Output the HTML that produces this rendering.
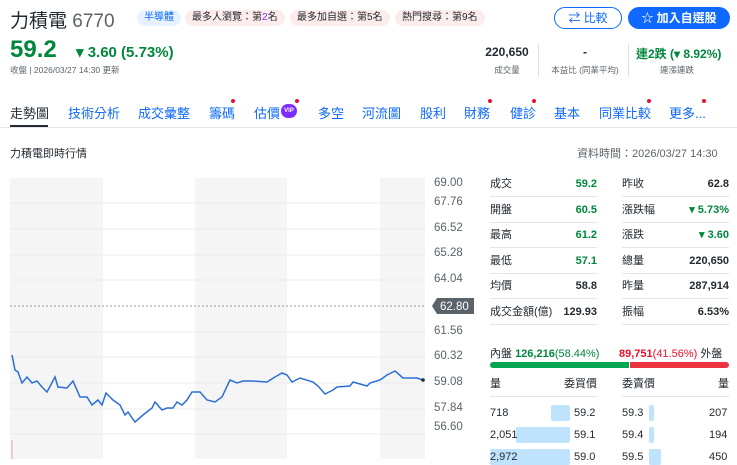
<!DOCTYPE html>
<html><head><meta charset="utf-8"><style>
*{margin:0;padding:0;box-sizing:border-box}
body{width:737px;height:459px;overflow:hidden;background:#fff;font-family:"Liberation Sans","Noto Sans CJK TC",sans-serif;color:#232a31;position:relative}
.a{position:absolute;white-space:nowrap}
.g{color:#00873c}.r{color:#eb0f29}
.tag{position:absolute;top:10px;height:16px;border-radius:8px;font-size:10px;line-height:16px;padding:0 7px;background:#fdecec;color:#232a31}
.tab{position:absolute;top:103px;font-size:13px;color:#0f69ff}
.dot{position:absolute;width:4px;height:4px;border-radius:2px;background:#eb0f29}
.row{position:absolute;height:25.5px;border-bottom:1px solid #e6e6e6;font-size:11px;line-height:26px}
.row span{position:absolute}
.row b{position:absolute;right:0;font-weight:bold}
.yl{position:absolute;left:434px;font-size:11.5px;color:#5b636a}
</style></head><body>
<div class="a" style="left:10px;top:6px;font-size:19px">力積電 <span style="color:#5b636a">6770</span></div>
<div class="tag" style="left:137px;background:#e6f2ff;color:#0f69ff">半導體</div>
<div class="tag" style="left:185px">最多人瀏覽：第<span style="color:#7d2eff">2</span>名</div>
<div class="tag" style="left:290px">最多加自選：第5名</div>
<div class="tag" style="left:395px">熱門搜尋：第9名</div>
<div class="a" style="left:554px;top:7px;width:68px;height:22px;border:1px solid #0f69ff;border-radius:11px;color:#0f69ff;font-size:12px;line-height:20px;text-align:center">⇄ 比較</div>
<div class="a" style="left:628px;top:7px;width:102px;height:22px;background:#0f69ff;border-radius:11px;color:#fff;font-size:12px;font-weight:bold;line-height:22px;text-align:center">☆ 加入自選股</div>
<div class="a g" style="left:10px;top:36px;font-size:24px;font-weight:bold">59.2</div>
<div class="a g" style="left:76px;top:43px;font-size:15px;font-weight:bold">▾ 3.60 (5.73%)</div>
<div class="a" style="left:10px;top:64px;font-size:8.5px;color:#5b636a">收盤 | 2026/03/27 14:30 更新</div>
<div class="a" style="left:482px;top:45px;font-size:12px;font-weight:bold;width:50px;text-align:center">220,650</div>
<div class="a" style="left:482px;top:64px;font-size:8.5px;color:#5b636a;width:50px;text-align:center">成交量</div>
<div class="a" style="left:538px;top:44px;height:33px;border-left:1px solid #e0e0e0"></div>
<div class="a" style="left:545px;top:45px;font-size:12px;font-weight:bold;width:80px;text-align:center">-</div>
<div class="a" style="left:545px;top:64px;font-size:8.5px;color:#5b636a;width:80px;text-align:center">本益比 (同業平均)</div>
<div class="a" style="left:628px;top:44px;height:33px;border-left:1px solid #e0e0e0"></div>
<div class="a g" style="left:636px;top:45px;font-size:12px;font-weight:bold">連2跌 (▾ 8.92%)</div>
<div class="a" style="left:660px;top:64px;font-size:8.5px;color:#5b636a">連漲連跌</div>
<div class="tab" style="left:10px;color:#232a31">走勢圖</div>
<div class="a" style="left:10px;top:125px;width:38px;height:3px;background:#232a31"></div>
<div class="a" style="left:0;top:127px;width:737px;height:1px;background:#e6e6e6"></div>
<div class="tab" style="left:68px">技術分析</div>
<div class="tab" style="left:138px">成交彙整</div>
<div class="tab" style="left:209px">籌碼</div><div class="dot" style="left:231px;top:99px"></div>
<div class="tab" style="left:254px">估價</div>
<div class="a" style="left:281px;top:104px;width:16px;height:14px;border-radius:7px;background:#7d2eff;color:#fff;font-size:6px;line-height:14px;text-align:center;font-weight:bold">VIP</div><div class="dot" style="left:295px;top:99px"></div>
<div class="tab" style="left:318px">多空</div>
<div class="tab" style="left:362px">河流圖</div>
<div class="tab" style="left:420px">股利</div>
<div class="tab" style="left:464px">財務</div><div class="dot" style="left:488px;top:99px"></div>
<div class="tab" style="left:510px">健診</div><div class="dot" style="left:532px;top:99px"></div>
<div class="tab" style="left:554px">基本</div>
<div class="tab" style="left:599px">同業比較</div><div class="dot" style="left:647px;top:99px"></div>
<div class="tab" style="left:669px">更多...</div><div class="dot" style="left:702px;top:99px"></div>
<div class="a" style="left:10px;top:145px;font-size:11px">力積電即時行情</div>
<div class="a" style="left:577px;top:145px;font-size:11px;color:#5b636a">資料時間：2026/03/27 14:30</div>
<svg class="a" style="left:0;top:170px" width="480" height="289">
<rect x="10" y="8" width="93" height="281" fill="#f5f5f5"/><rect x="195" y="8" width="92" height="281" fill="#f5f5f5"/><rect x="380" y="8" width="45" height="281" fill="#f5f5f5"/>
<g stroke="#ebebeb" stroke-width="1"><line x1="10" x2="425" y1="33" y2="33"/><line x1="10" x2="425" y1="59" y2="59"/><line x1="10" x2="425" y1="85" y2="85"/><line x1="10" x2="425" y1="110" y2="110"/><line x1="10" x2="425" y1="162" y2="162"/><line x1="10" x2="425" y1="187" y2="187"/><line x1="10" x2="425" y1="213" y2="213"/><line x1="10" x2="425" y1="239" y2="239"/><line x1="10" x2="425" y1="264" y2="264"/></g>
<line x1="10" x2="425" y1="136" y2="136" stroke="#999" stroke-dasharray="2,2"/>
<line x1="12" x2="12" y1="270" y2="289" stroke="#f4a0a8"/>
<polyline fill="none" stroke="#2b6fd6" stroke-width="1.5" points="12,185 15,200 18,202 22,213 27,207 32,213 37,211 42,217 47,222 55,207 58,217 67,218 73,211 80,227 87,227 92,235 98,230 102,235 106,223 113,230 120,235 125,245 128,242 135,252 143,245 152,238 155,232 162,240 167,238 173,238 177,232 182,235 187,230 192,222 200,222 207,230 215,232 222,227 230,210 237,213 243,211 253,211 267,212 275,207 282,203 287,205 292,212 300,208 313,212 318,216 325,224 333,220 337,217 350,216 353,212 360,214 367,216 370,213 380,210 387,205 395,201 403,208 417,208 423,210"/>
<circle cx="423" cy="210" r="1.8" fill="#232a31"/>
<path d="M432,136 L437,128 H474 V144 H437 Z" fill="#5b636a"/>
<text x="440" y="140" font-size="11.5" fill="#fff" font-family="Liberation Sans">62.80</text>
</svg>
<div class="yl" style="top:177px">69.00</div><div class="yl" style="top:196px">67.76</div><div class="yl" style="top:222px">66.52</div><div class="yl" style="top:247px">65.28</div><div class="yl" style="top:273px">64.04</div><div class="yl" style="top:325px">61.56</div><div class="yl" style="top:350px">60.32</div><div class="yl" style="top:376px">59.08</div><div class="yl" style="top:402px">57.84</div><div class="yl" style="top:421px">56.60</div>
<div class="row" style="left:490px;top:171px;width:107px"><span>成交</span><b class="g">59.2</b></div>
<div class="row" style="left:490px;top:197px;width:107px"><span>開盤</span><b class="g">60.5</b></div>
<div class="row" style="left:490px;top:222px;width:107px"><span>最高</span><b class="g">61.2</b></div>
<div class="row" style="left:490px;top:248px;width:107px"><span>最低</span><b class="g">57.1</b></div>
<div class="row" style="left:490px;top:273px;width:107px"><span>均價</span><b>58.8</b></div>
<div class="row" style="left:490px;top:299px;width:107px"><span>成交金額(億)</span><b>129.93</b></div>
<div class="row" style="left:622px;top:171px;width:107px"><span>昨收</span><b>62.8</b></div>
<div class="row" style="left:622px;top:197px;width:107px"><span>漲跌幅</span><b class="g">▾ 5.73%</b></div>
<div class="row" style="left:622px;top:222px;width:107px"><span>漲跌</span><b class="g">▾ 3.60</b></div>
<div class="row" style="left:622px;top:248px;width:107px"><span>總量</span><b>220,650</b></div>
<div class="row" style="left:622px;top:273px;width:107px"><span>昨量</span><b>287,914</b></div>
<div class="row" style="left:622px;top:299px;width:107px"><span>振幅</span><b>6.53%</b></div>
<div class="a" style="left:490px;top:345px;font-size:11px">內盤 <span class="g"><b>126,216</b>(58.44%)</span></div>
<div class="a" style="left:619px;top:345px;font-size:11px"><span class="r"><b>89,751</b>(41.56%)</span> 外盤</div>
<div class="a" style="left:490px;top:362px;width:139px;height:6px;background:#00a651;border-radius:3px 0 0 3px"></div>
<div class="a" style="left:630px;top:362px;width:99px;height:6px;background:#eb3341;border-radius:0 3px 3px 0"></div>
<div class="row" style="left:490px;top:371px;width:107px"><span>量</span><b style="font-weight:normal">委買價</b></div>
<div class="row" style="left:622px;top:371px;width:107px"><span>委賣價</span><b style="font-weight:normal">量</b></div>
<div class="a" style="left:551px;top:405px;width:19px;height:16px;background:#bfe3fc;border-radius:2px"></div>
<div class="a" style="left:516px;top:427px;width:54px;height:16px;background:#bfe3fc;border-radius:2px"></div>
<div class="a" style="left:490px;top:449px;width:80px;height:16px;background:#bfe3fc;border-radius:2px"></div>
<div class="a" style="left:649px;top:405px;width:5px;height:16px;background:#bfe3fc;border-radius:2px"></div>
<div class="a" style="left:649px;top:427px;width:5px;height:16px;background:#bfe3fc;border-radius:2px"></div>
<div class="a" style="left:649px;top:449px;width:12px;height:16px;background:#bfe3fc;border-radius:2px"></div>
<div class="a" style="left:490px;top:406px;font-size:11px;line-height:14px">718</div><div class="a" style="left:574px;top:406px;font-size:11px;line-height:14px">59.2</div><div class="a" style="left:622px;top:406px;font-size:11px;line-height:14px">59.3</div><div class="a" style="left:709px;top:406px;font-size:11px;line-height:14px">207</div>
<div class="a" style="left:490px;top:428px;font-size:11px;line-height:14px">2,051</div><div class="a" style="left:574px;top:428px;font-size:11px;line-height:14px">59.1</div><div class="a" style="left:622px;top:428px;font-size:11px;line-height:14px">59.4</div><div class="a" style="left:709px;top:428px;font-size:11px;line-height:14px">194</div>
<div class="a" style="left:490px;top:450px;font-size:11px;line-height:14px">2,972</div><div class="a" style="left:574px;top:450px;font-size:11px;line-height:14px">59.0</div><div class="a" style="left:622px;top:450px;font-size:11px;line-height:14px">59.5</div><div class="a" style="left:709px;top:450px;font-size:11px;line-height:14px">450</div>
</body></html>
